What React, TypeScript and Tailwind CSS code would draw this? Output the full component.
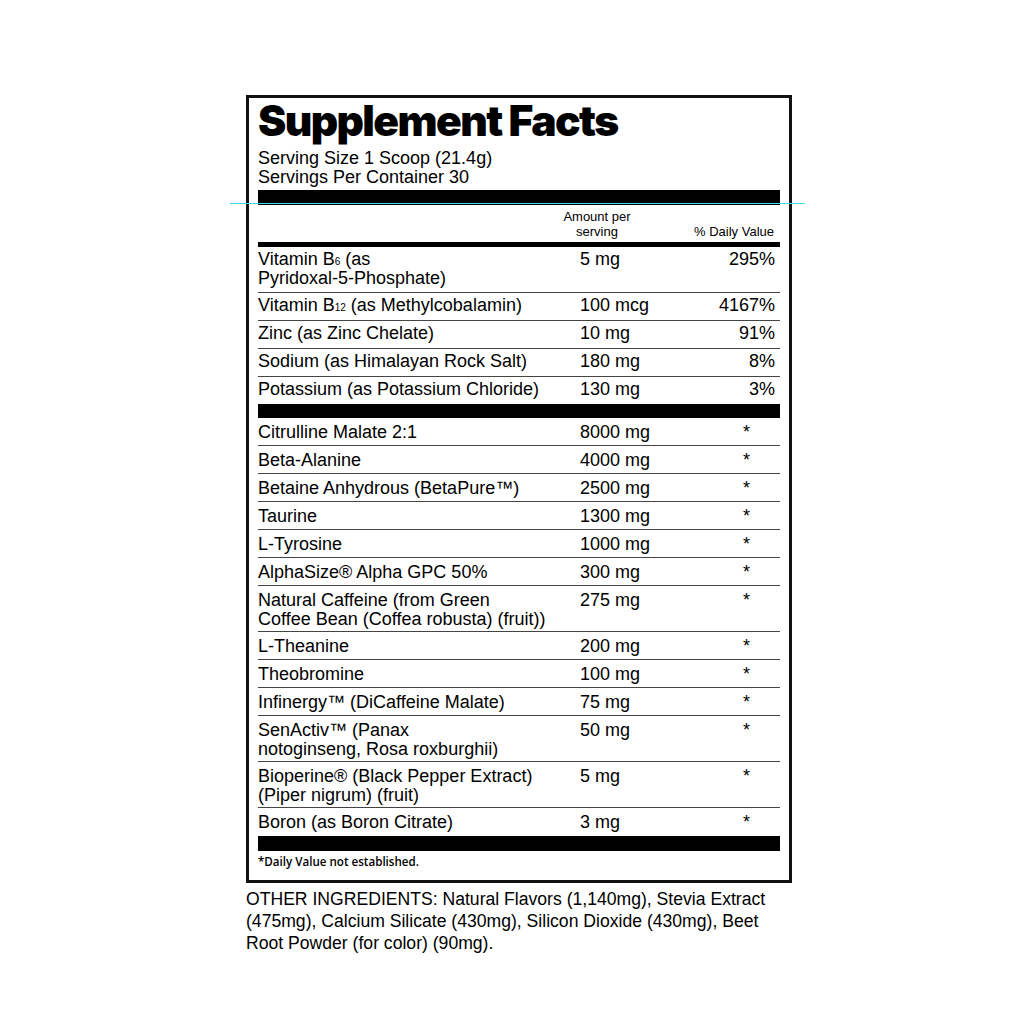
import React from 'react';

type Row = {
  name: React.ReactNode;
  amount: string;
  dv?: string;
  double?: boolean;
};

const sub = (n: string) => <span className="text-[10px] leading-none">{n}</span>;

const vitamins: Row[] = [
  {
    name: (
      <>
        Vitamin B{sub('6')} (as
        <br />
        Pyridoxal-5-Phosphate)
      </>
    ),
    amount: '5 mg',
    dv: '295%',
    double: true,
  },
  { name: <>Vitamin B{sub('12')} (as Methylcobalamin)</>, amount: '100 mcg', dv: '4167%' },
  { name: 'Zinc (as Zinc Chelate)', amount: '10 mg', dv: '91%' },
  { name: 'Sodium (as Himalayan Rock Salt)', amount: '180 mg', dv: '8%' },
  { name: 'Potassium (as Potassium Chloride)', amount: '130 mg', dv: '3%' },
];

const blend: Row[] = [
  { name: 'Citrulline Malate 2:1', amount: '8000 mg' },
  { name: 'Beta-Alanine', amount: '4000 mg' },
  { name: 'Betaine Anhydrous (BetaPure™)', amount: '2500 mg' },
  { name: 'Taurine', amount: '1300 mg' },
  { name: 'L-Tyrosine', amount: '1000 mg' },
  { name: 'AlphaSize® Alpha GPC 50%', amount: '300 mg' },
  {
    name: (
      <>
        Natural Caffeine (from Green
        <br />
        Coffee Bean (Coffea robusta) (fruit))
      </>
    ),
    amount: '275 mg',
    double: true,
  },
  { name: 'L-Theanine', amount: '200 mg' },
  { name: 'Theobromine', amount: '100 mg' },
  { name: 'Infinergy™ (DiCaffeine Malate)', amount: '75 mg' },
  {
    name: (
      <>
        SenActiv™ (Panax
        <br />
        notoginseng, Rosa roxburghii)
      </>
    ),
    amount: '50 mg',
    double: true,
  },
  {
    name: (
      <>
        Bioperine® (Black Pepper Extract)
        <br />
        (Piper nigrum) (fruit)
      </>
    ),
    amount: '5 mg',
    double: true,
  },
  { name: 'Boron (as Boron Citrate)', amount: '3 mg' },
];

function FactRow({ row, last, vit }: { row: Row; last: boolean; vit?: boolean }) {
  const pad = vit
    ? row.double
      ? 'pt-[3px] pb-[4px]'
      : 'pt-[3px] pb-[5px]'
    : row.double
      ? 'pt-[5px] pb-[2px]'
      : 'pt-[5px] pb-[3px]';
  return (
    <div className={`flex ${pad} text-[18px] leading-[19px] ${last ? 'pb-[4px]' : 'border-b border-[#444]'}`}>
      <div className="w-[322px]">{row.name}</div>
      <div className="w-[110px]">{row.amount}</div>
      <div className="flex-1 text-right pr-[5px]">
        {row.dv ? row.dv : <span className="inline-block pr-[25px]">*</span>}
      </div>
    </div>
  );
}

export default function App() {
  return (
    <div className="relative min-h-screen w-full bg-white text-black font-['Liberation_Sans',Arial,sans-serif]">
      <div className="pl-[246px] pt-[95px]">
        <div className="w-[546px] border-[3px] border-[#111] px-[9px]">
          <h1 className="mt-[1px] font-['Inter',sans-serif] text-[42.5px] font-black leading-[44px] tracking-[-1.6px]">
            Supplement Facts
          </h1>
          <div className="mt-[6px] text-[18px] leading-[19px]">
            <div>Serving Size 1 Scoop (21.4g)</div>
            <div>Servings Per Container 30</div>
          </div>
          <div className="mt-[3px] h-[15px] bg-black" />
          <div className="flex h-[37px] items-end pb-[3px] text-[13px] leading-[15px]">
            <div className="w-[304px]" />
            <div className="w-[70px] text-center">
              Amount per
              <br />
              serving
            </div>
            <div className="flex-1 text-right pr-[6px]">% Daily Value</div>
          </div>
          <div className="h-[5px] bg-black" />
          {vitamins.map((r, i) => (
            <FactRow key={i} row={r} vit last={i === vitamins.length - 1} />
          ))}
          <div className="h-[14px] bg-black" />
          {blend.map((r, i) => (
            <FactRow key={i} row={r} last={i === blend.length - 1} />
          ))}
          <div className="h-[15px] bg-black" />
          <div className="h-[29px] pt-[4px] font-['Open_Sans',sans-serif] text-[11.6px] font-semibold leading-[14px]">
            *Daily Value not established.
          </div>
        </div>
        <p className="mt-[5px] w-[560px] text-[17.6px] leading-[22px]">
          OTHER INGREDIENTS: Natural Flavors (1,140mg), Stevia Extract
          <br />
          (475mg), Calcium Silicate (430mg), Silicon Dioxide (430mg), Beet
          <br />
          Root Powder (for color) (90mg).
        </p>
      </div>
      <div className="absolute left-[230px] top-[203px] h-px w-[575px] bg-[#3fdbe3]" />
    </div>
  );
}
